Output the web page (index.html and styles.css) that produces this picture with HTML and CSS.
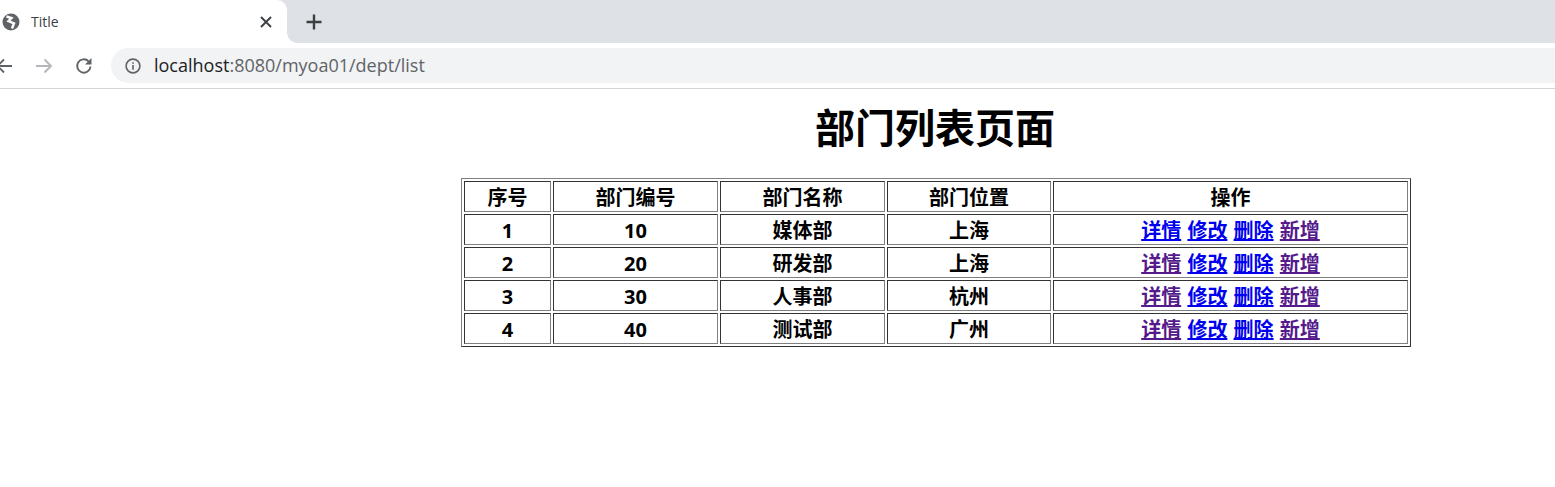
FILE: index.html
```html
<!DOCTYPE html>
<html lang="zh">
<head>
<meta charset="utf-8">
<title>Title</title>
<link rel="stylesheet" href="styles.css">
</head>
<body>
<header class="chrome">
  <div class="tabstrip">
    <div class="tab">
      <svg class="globe" viewBox="0 0 18 18"><circle cx="9" cy="9" r="8.500" fill="#5f6368"/><path d="M4.500 3.500 9.500 5 6.500 8l5.500 2.300L10 15.500" stroke="#fff" stroke-width="2.400" fill="none"/></svg>
      <span class="tab-title">Title</span>
      <svg class="close" viewBox="0 0 12 12"><path d="M1 1l10 10M11 1 1 11" stroke="#3c4043" stroke-width="1.900" fill="none"/></svg>
    </div>
    <svg class="newtab" viewBox="0 0 16 16"><path d="M8 .5v15M.5 8h15" stroke="#3c4043" stroke-width="2.400" fill="none"/></svg>
  </div>
  <div class="toolbar">
    <svg class="nav back" viewBox="4 0 12 18"><path d="M16 9H1.500M8 2.500 1.500 9 8 15.500" stroke="#5f6368" stroke-width="1.900" fill="none"/></svg>
    <svg class="nav forward" viewBox="0 0 18 18"><path d="M1 9h15M9.500 2.500 16 9l-6.500 6.500" stroke="#b4b7bb" stroke-width="1.900" fill="none"/></svg>
    <svg class="nav reload" viewBox="0 0 18 18"><path d="M15.500 9.500a6.700 6.700 0 1 1-1.900-5.200" stroke="#5f6368" stroke-width="1.900" fill="none"/><path d="M16.500 1v6.500H10z" fill="#5f6368"/></svg>
    <div class="omnibox">
      <svg class="info" viewBox="0 0 16 16"><circle cx="8" cy="8" r="6.900" stroke="#5f6368" stroke-width="1.600" fill="none"/><path d="M7.200 7h1.600v4.800H7.200zM7.200 4.200h1.600v1.600H7.200z" fill="#5f6368"/></svg>
      <span class="url"><span class="host">localhost</span>:8080/myoa01/dept/list</span>
    </div>
  </div>
</header>
<main class="page">
  <h1 class="title">部门列表页面</h1>
  <table class="dept">
    <thead>
      <tr><th class="c1">序号</th><th class="c2">部门编号</th><th class="c3">部门名称</th><th class="c4">部门位置</th><th>操作</th></tr>
    </thead>
    <tbody>
      <tr><td>1</td><td>10</td><td>媒体部</td><td>上海</td><td><a href="#" class="new">详情</a> <a href="#" class="new">修改</a> <a href="#" class="new">删除</a> <a href="#" class="seen">新增</a></td></tr>
      <tr><td>2</td><td>20</td><td>研发部</td><td>上海</td><td><a href="#" class="seen">详情</a> <a href="#" class="new">修改</a> <a href="#" class="new">删除</a> <a href="#" class="seen">新增</a></td></tr>
      <tr><td>3</td><td>30</td><td>人事部</td><td>杭州</td><td><a href="#" class="seen">详情</a> <a href="#" class="new">修改</a> <a href="#" class="new">删除</a> <a href="#" class="seen">新增</a></td></tr>
      <tr><td>4</td><td>40</td><td>测试部</td><td>广州</td><td><a href="#" class="seen">详情</a> <a href="#" class="new">修改</a> <a href="#" class="new">删除</a> <a href="#" class="seen">新增</a></td></tr>
    </tbody>
  </table>
</main>
</body>
</html>
```
FILE: styles.css
```css
html, body { margin: 0; padding: 0; background: #fff; overflow: hidden; height: 100%; }
body { font-family: "Noto Sans", "Noto Sans CJK SC", sans-serif; color: #000; }

.chrome { width: 1555px; }
.tabstrip { height: 43px; background: #dee1e6; display: flex; align-items: center; }
.tab { position: relative; width: 287px; height: 43px; background: #fff; border-top-right-radius: 10px; display: flex; align-items: center; box-sizing: border-box; padding-left: 2px; flex: none; }
.tab::after { content: ""; position: absolute; right: -10px; bottom: 0; width: 10px; height: 10px; background: radial-gradient(circle at 100% 0, transparent 9.500px, #fff 10px); }
.globe { width: 18px; height: 18px; flex: none; }
.tab-title { margin-left: 11px; font-size: 14px; color: #3c4043; font-family: "Open Sans", sans-serif; }
.close { width: 12px; height: 12px; margin-left: auto; margin-right: 15px; flex: none; }
.newtab { width: 16px; height: 16px; margin-left: 19px; flex: none; }

.toolbar { height: 45px; border-bottom: 1px solid #d5d6d8; display: flex; align-items: center; }
.nav { height: 18px; flex: none; }
.back { width: 12px; }
.forward { width: 18px; margin-left: 23px; }
.reload { width: 18px; margin-left: 22px; }
.omnibox { flex: 1; height: 35px; margin-left: 18px; background: #f1f3f4; border-radius: 18px 0 0 18px; display: flex; align-items: center; padding-left: 14px; }
.info { width: 16px; height: 16px; flex: none; }
.url { margin-left: 13px; margin-bottom: 2px; font-size: 18px; color: #5f6368; font-family: "Open Sans", sans-serif; white-space: nowrap; }
.host { color: #202124; }

.page { width: 1872px; }
.title { margin: 0; padding: 13px 2px 0 0; height: 89px; box-sizing: border-box; text-align: center; font-size: 40px; line-height: 52px; font-weight: 700; }
.dept { margin: 0 auto; width: 950px; table-layout: fixed; border: 1px solid; border-color: #808080 #333 #333 #808080; border-spacing: 2px; border-collapse: separate; font-size: 20px; font-weight: 700; }
.dept th, .dept td { border: 1px solid; border-color: #333 #808080 #808080 #333; padding: 2px 1px 0; height: 27px; line-height: 27px; text-align: center; font-weight: 700; word-spacing: 1px; }
.c1 { width: 83px; }
.c2, .c3 { width: 161px; }
.c4 { width: 160px; }
a { text-decoration: underline; }
.new { color: #0000ee; }
.seen { color: #551a8b; }
```
